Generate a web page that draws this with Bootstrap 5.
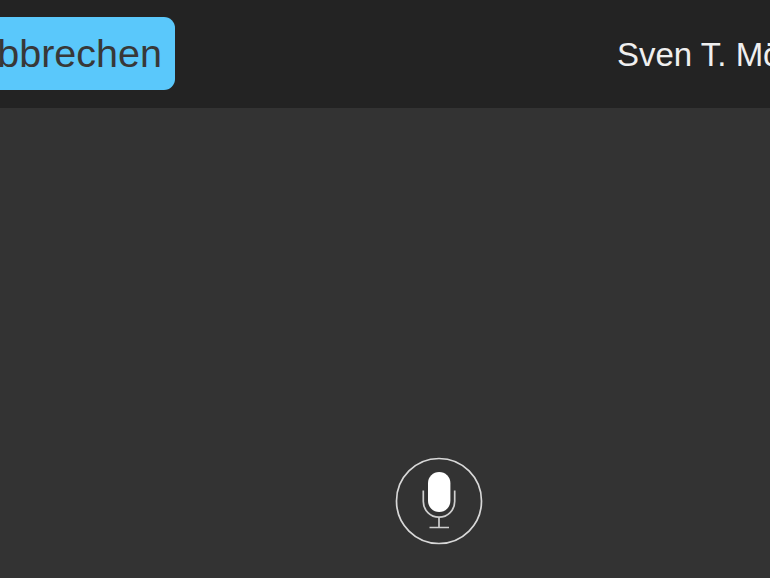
<!DOCTYPE html>
<html lang="de">
<head>
<meta charset="utf-8">
<title>Siri</title>
<link href="https://cdn.jsdelivr.net/npm/bootstrap@5.3.0/dist/css/bootstrap.min.css" rel="stylesheet">
<style>
html, body { height: 100%; margin: 0; }
body { background: #333333; font-family: "Liberation Sans", Arial, sans-serif; overflow: hidden; }
.app-shell { width: 770px; height: 578px; overflow: hidden; }
.top-bar { height: 108px; background: #232323; overflow: hidden; flex-wrap: nowrap; }
.cancel-btn { width: 205px; height: 73px; margin-left: -30px; background: #5ac8fb; color: #383838; border: 0; border-radius: 0 11px 11px 0; font-size: 39.5px; line-height: 73px; padding: 0 13px 0 0; text-align: right; white-space: nowrap; margin-top: 17px; flex: none; }
.contact-name { color: #efefef; font-size: 33px; line-height: 1; white-space: nowrap; margin-left: 442px; margin-top: 38px; flex: none; }
.mic-area { height: 470px; padding: 0 0 33px 108px; }
.mic-icon { display: block; }
</style>
<script src="https://cdn.jsdelivr.net/npm/bootstrap@5.3.0/dist/js/bootstrap.bundle.min.js"></script>
</head>
<body>
<div class="app-shell d-flex flex-column">
  <header class="top-bar d-flex align-items-start">
    <button type="button" class="btn cancel-btn">Abbrechen</button>
    <div class="contact-name">Sven T. Möller</div>
  </header>
  <main class="mic-area d-flex justify-content-center align-items-end">
    <svg class="mic-icon" width="88" height="88" viewBox="0 0 88 88" role="img" aria-label="Mikrofon">
      <circle cx="44" cy="44" r="42.5" fill="none" stroke="#d8d8d8" stroke-width="1.7"/>
      <rect x="33" y="15" width="22.4" height="40" rx="11.2" fill="#ffffff"/>
      <path d="M28.3 33.5V44.5A15.7 15.7 0 0 0 59.7 44.5V33.5" fill="none" stroke="#cfcfcf" stroke-width="1.7"/>
      <path d="M44 60V70.5M34.5 70.5H54" fill="none" stroke="#cfcfcf" stroke-width="1.7"/>
    </svg>
  </main>
</div>
</body>
</html>
